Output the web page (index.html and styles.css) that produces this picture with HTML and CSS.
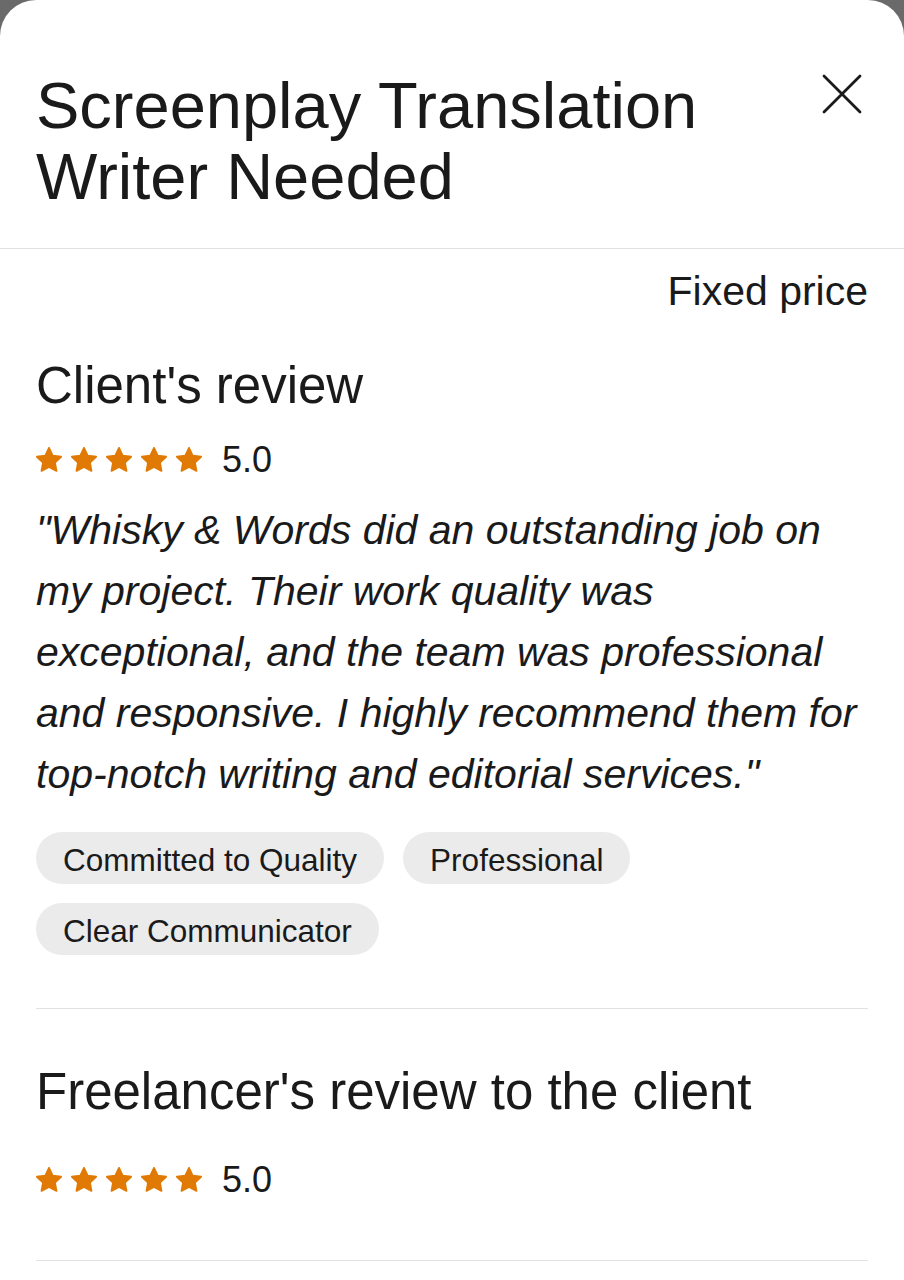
FILE: index.html
```html
<!DOCTYPE html>
<html lang="en">
<head>
<meta charset="utf-8">
<title>Screenplay Translation Writer Needed</title>
<link rel="stylesheet" href="styles.css">
</head>
<body>
<div class="modal">
  <header class="modal-header">
    <h1 class="title">Screenplay Translation Writer Needed</h1>
    <button class="close" aria-label="Close">
      <svg width="40" height="40" viewBox="0 0 40 40"><path d="M2 2L38 38M38 2L2 38" stroke="#1a1a1a" stroke-width="2.8" stroke-linecap="round" fill="none"/></svg>
    </button>
  </header>
  <main class="modal-body">
    <div class="contract-type">Fixed price</div>
    <section class="review">
      <h2 class="review-title">Client's review</h2>
      <div class="rating">
        <div class="stars">
          <svg class="star" viewBox="2 1.9 20 20"><path d="M12 2.6l2.85 5.9 6.45.9-4.7 4.5 1.15 6.4L12 17.25 6.25 20.3l1.15-6.4-4.7-4.5 6.45-.9z"/></svg>
          <svg class="star" viewBox="2 1.9 20 20"><path d="M12 2.6l2.85 5.9 6.45.9-4.7 4.5 1.15 6.4L12 17.25 6.25 20.3l1.15-6.4-4.7-4.5 6.45-.9z"/></svg>
          <svg class="star" viewBox="2 1.9 20 20"><path d="M12 2.6l2.85 5.9 6.45.9-4.7 4.5 1.15 6.4L12 17.25 6.25 20.3l1.15-6.4-4.7-4.5 6.45-.9z"/></svg>
          <svg class="star" viewBox="2 1.9 20 20"><path d="M12 2.6l2.85 5.9 6.45.9-4.7 4.5 1.15 6.4L12 17.25 6.25 20.3l1.15-6.4-4.7-4.5 6.45-.9z"/></svg>
          <svg class="star" viewBox="2 1.9 20 20"><path d="M12 2.6l2.85 5.9 6.45.9-4.7 4.5 1.15 6.4L12 17.25 6.25 20.3l1.15-6.4-4.7-4.5 6.45-.9z"/></svg>
        </div>
        <span class="score">5.0</span>
      </div>
      <p class="quote">"Whisky &amp; Words did an outstanding job on my project. Their work quality was exceptional, and the team was professional and responsive. I highly recommend them for top-notch writing and editorial services."</p>
      <div class="chips">
        <span class="chip">Committed to Quality</span>
        <span class="chip">Professional</span>
        <span class="chip">Clear Communicator</span>
      </div>
    </section>
    <hr class="divider">
    <section class="review">
      <h2 class="review-title second">Freelancer's review to the client</h2>
      <div class="rating rating-second">
        <div class="stars">
          <svg class="star" viewBox="2 1.9 20 20"><path d="M12 2.6l2.85 5.9 6.45.9-4.7 4.5 1.15 6.4L12 17.25 6.25 20.3l1.15-6.4-4.7-4.5 6.45-.9z"/></svg>
          <svg class="star" viewBox="2 1.9 20 20"><path d="M12 2.6l2.85 5.9 6.45.9-4.7 4.5 1.15 6.4L12 17.25 6.25 20.3l1.15-6.4-4.7-4.5 6.45-.9z"/></svg>
          <svg class="star" viewBox="2 1.9 20 20"><path d="M12 2.6l2.85 5.9 6.45.9-4.7 4.5 1.15 6.4L12 17.25 6.25 20.3l1.15-6.4-4.7-4.5 6.45-.9z"/></svg>
          <svg class="star" viewBox="2 1.9 20 20"><path d="M12 2.6l2.85 5.9 6.45.9-4.7 4.5 1.15 6.4L12 17.25 6.25 20.3l1.15-6.4-4.7-4.5 6.45-.9z"/></svg>
          <svg class="star" viewBox="2 1.9 20 20"><path d="M12 2.6l2.85 5.9 6.45.9-4.7 4.5 1.15 6.4L12 17.25 6.25 20.3l1.15-6.4-4.7-4.5 6.45-.9z"/></svg>
        </div>
        <span class="score">5.0</span>
      </div>
    </section>
    <hr class="divider last">
  </main>
</div>
</body>
</html>
```

FILE: styles.css
```css
* { box-sizing: border-box; }

html, body {
  margin: 0;
  padding: 0;
}

body {
  background: #6a6a6a;
  font-family: "Liberation Sans", Arial, sans-serif;
  color: #1a1a1a;
}

.modal {
  background: #ffffff;
  border-radius: 36px 36px 0 0;
  min-height: 1280px;
  overflow: hidden;
}

.modal-header {
  display: flex;
  justify-content: space-between;
  align-items: flex-start;
  padding: 70px 36px 36px 36px;
  border-bottom: 1px solid #e2e2e2;
}

.title {
  margin: 0;
  font-size: 65px;
  line-height: 71px;
  font-weight: 400;
  letter-spacing: 0;
  max-width: 700px;
}

.close {
  background: none;
  border: 0;
  padding: 0;
  margin: 4px 6px 0 0;
  width: 40px;
  height: 40px;
  display: block;
  cursor: pointer;
}

.close svg { display: block; }

.modal-body {
  padding: 0 36px;
}

.contract-type {
  margin-top: 18px;
  text-align: right;
  font-size: 41px;
  line-height: 48px;
}

.review-title {
  margin: 41px 0 0 0;
  font-size: 51px;
  line-height: 60px;
  font-weight: 400;
}

.review-title.second {
  margin-top: 53px;
}

.rating {
  display: flex;
  align-items: center;
  height: 36px;
  margin-top: 26px;
}

.rating-second {
  margin-top: 40px;
}

.stars {
  display: flex;
  gap: 9px;
  margin-right: 20px;
}

.star {
  width: 26px;
  height: 26px;
  display: block;
}

.star path {
  fill: #e07a04;
  stroke: #e07a04;
  stroke-width: 1.4;
  stroke-linejoin: round;
}

.score {
  font-size: 36px;
  line-height: 36px;
}

.quote {
  margin: 22px 0 0 0;
  font-style: italic;
  font-size: 41px;
  line-height: 61px;
}

.chips {
  display: flex;
  flex-wrap: wrap;
  gap: 19px;
  margin-top: 27px;
}

.chip {
  background: #ebebeb;
  border-radius: 26px;
  height: 52px;
  padding: 4px 27px 0 27px;
  font-size: 31.5px;
  line-height: 48px;
  white-space: nowrap;
}

.divider {
  border: 0;
  border-top: 1px solid #e2e2e2;
  margin: 53px 0 0 0;
  height: 0;
}

.divider.last {
  margin-top: 62px;
}
```
